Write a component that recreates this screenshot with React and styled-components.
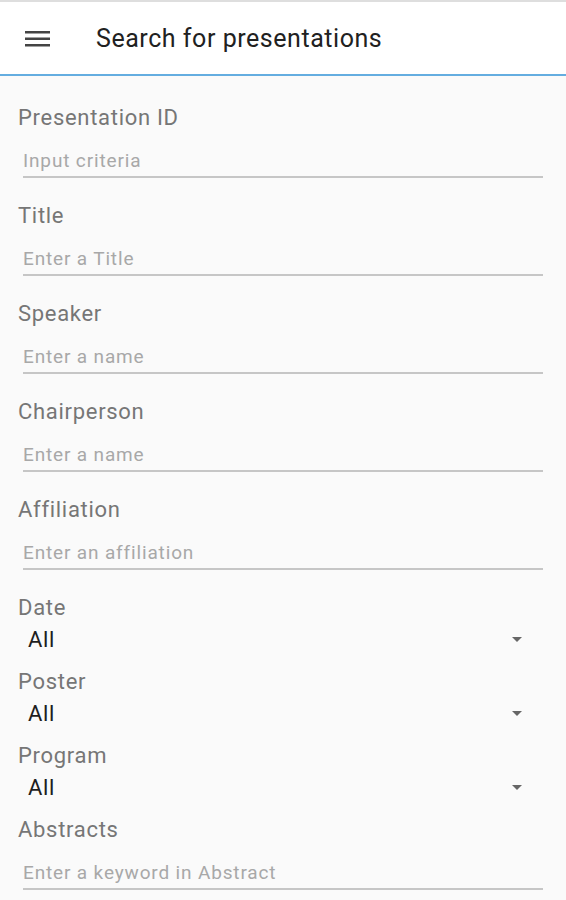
import React from 'react';
import styled, { createGlobalStyle } from 'styled-components';

const GlobalStyle = createGlobalStyle`
  html, body {
    margin: 0;
    padding: 0;
    background: #fafafa;
    font-family: Roboto, "Noto Sans", sans-serif;
  }
  * { box-sizing: border-box; }
`;

const Page = styled.div`
  width: 566px;
  min-height: 900px;
  background: #fafafa;
`;

const Header = styled.header`
  display: flex;
  align-items: center;
  height: 76px;
  background: #fff;
  border-top: 2px solid #dedede;
  border-bottom: 2px solid #64ade0;
`;

const MenuButton = styled.button`
  display: flex;
  align-items: center;
  justify-content: center;
  width: 50px;
  height: 40px;
  margin-left: 13px;
  padding: 0;
  border: none;
  background: none;
  cursor: pointer;
`;

const Title = styled.h1`
  margin: 0 0 0 33px;
  font-size: 25px;
  font-weight: 400;
  color: #212121;
  letter-spacing: 0.55px;
`;

const Form = styled.form`
  display: flex;
  flex-direction: column;
  padding: 28px 23px 0 18px;
`;

const Field = styled.div`
  display: flex;
  flex-direction: column;
  margin-bottom: ${(p) => p.$gap}px;
`;

const Label = styled.label`
  font-size: 22px;
  line-height: 28px;
  letter-spacing: 0.7px;
  color: #767676;
`;

const TextInput = styled.input`
  height: 46px;
  margin-left: 5px;
  padding: 12px 0 0 0;
  border: none;
  border-bottom: 2px solid #c6c6c6;
  background: transparent;
  font-family: inherit;
  font-size: 19px;
  letter-spacing: 0.85px;
  color: #333;
  outline: none;

  &::placeholder {
    color: #a8a8a8;
  }
`;

const SelectRow = styled.div`
  display: flex;
  align-items: center;
  justify-content: space-between;
  height: 34px;
  padding: 0 21px 0 10px;
  cursor: pointer;
`;

const SelectValue = styled.span`
  font-size: 22px;
  letter-spacing: 0.6px;
  color: #1e1e1e;
`;

const Caret = styled.span`
  width: 0;
  height: 0;
  border-left: 5px solid transparent;
  border-right: 5px solid transparent;
  border-top: 5px solid #666;
`;

const MenuIcon = () => (
  <svg width="26" height="20" viewBox="0 0 26 20">
    <rect x="0" y="3" width="25" height="2.5" fill="#444" />
    <rect x="0" y="9.5" width="25" height="2.5" fill="#444" />
    <rect x="0" y="16" width="25" height="2.5" fill="#444" />
  </svg>
);

const textFields = [
  { label: 'Presentation ID', placeholder: 'Input criteria' },
  { label: 'Title', placeholder: 'Enter a Title' },
  { label: 'Speaker', placeholder: 'Enter a name' },
  { label: 'Chairperson', placeholder: 'Enter a name' },
  { label: 'Affiliation', placeholder: 'Enter an affiliation' },
];

const selectFields = ['Date', 'Poster', 'Program'];

export default function App() {
  return (
    <Page>
      <GlobalStyle />
      <Header>
        <MenuButton aria-label="menu">
          <MenuIcon />
        </MenuButton>
        <Title>Search for presentations</Title>
      </Header>
      <Form>
        {textFields.map((f) => (
          <Field key={f.label} $gap={24}>
            <Label>{f.label}</Label>
            <TextInput placeholder={f.placeholder} />
          </Field>
        ))}
        {selectFields.map((name) => (
          <Field key={name} $gap={12}>
            <Label>{name}</Label>
            <SelectRow>
              <SelectValue>All</SelectValue>
              <Caret />
            </SelectRow>
          </Field>
        ))}
        <Field $gap={10}>
          <Label>Abstracts</Label>
          <TextInput placeholder="Enter a keyword in Abstract" />
        </Field>
      </Form>
    </Page>
  );
}
